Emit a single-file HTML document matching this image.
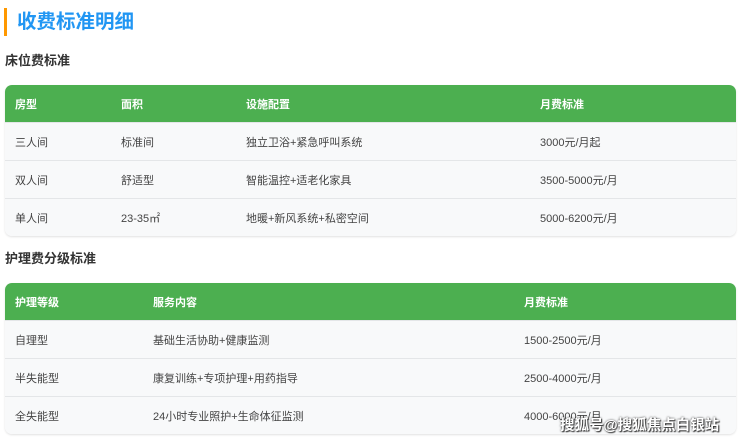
<!DOCTYPE html>
<html><head><meta charset="utf-8"><style>
body{margin:0;width:740px;height:440px;background:#fff;font-family:"Liberation Sans","Noto Sans CJK SC",sans-serif;position:relative;overflow:hidden;color:#444}
.t{position:absolute;left:4px;top:8px;width:3px;height:28px;background:#ff9800}
.tt{position:absolute;left:17px;top:8px;line-height:28px;font-size:19.5px;font-weight:bold;color:#2196f3}
h3{position:absolute;left:5px;margin:0;font-size:13px;font-weight:bold;color:#333;line-height:16px}
table{position:absolute;left:5px;width:731px;border-collapse:collapse;border-radius:7px;overflow:hidden;box-shadow:0 1px 2px rgba(0,0,0,.12);font-size:11px}
th{background:#4caf50;color:#fff;text-align:left;font-weight:bold;height:37px;padding:0 0 0 10px}
td{background:#f8f9fa;height:37px;padding:0 0 0 10px;border-top:1px solid #e4e6e8;color:#444}
.wm{position:absolute;left:560px;top:414px;font-size:14.5px;font-weight:bold;color:#fff;text-shadow:0 0 2px #333,1px 1px 1px #333}
</style></head><body>
<div class="t"></div><div class="tt">收费标准明细</div>
<h3 style="top:53px">床位费标准</h3>
<table style="top:85px"><tr><th style="width:96px">房型</th><th style="width:115px">面积</th><th style="width:284px">设施配置</th><th>月费标准</th></tr>
<tr><td>三人间</td><td>标准间</td><td>独立卫浴+紧急呼叫系统</td><td>3000元/月起</td></tr>
<tr><td>双人间</td><td>舒适型</td><td>智能温控+适老化家具</td><td>3500-5000元/月</td></tr>
<tr><td>单人间</td><td>23-35㎡</td><td>地暖+新风系统+私密空间</td><td>5000-6200元/月</td></tr></table>
<h3 style="top:251px">护理费分级标准</h3>
<table style="top:283px"><tr><th style="width:128px">护理等级</th><th style="width:361px">服务内容</th><th>月费标准</th></tr>
<tr><td>自理型</td><td>基础生活协助+健康监测</td><td>1500-2500元/月</td></tr>
<tr><td>半失能型</td><td>康复训练+专项护理+用药指导</td><td>2500-4000元/月</td></tr>
<tr><td>全失能型</td><td>24小时专业照护+生命体征监测</td><td>4000-6000元/月</td></tr></table>
<div class="wm">搜狐号@搜狐焦点白银站</div>
</body></html>
